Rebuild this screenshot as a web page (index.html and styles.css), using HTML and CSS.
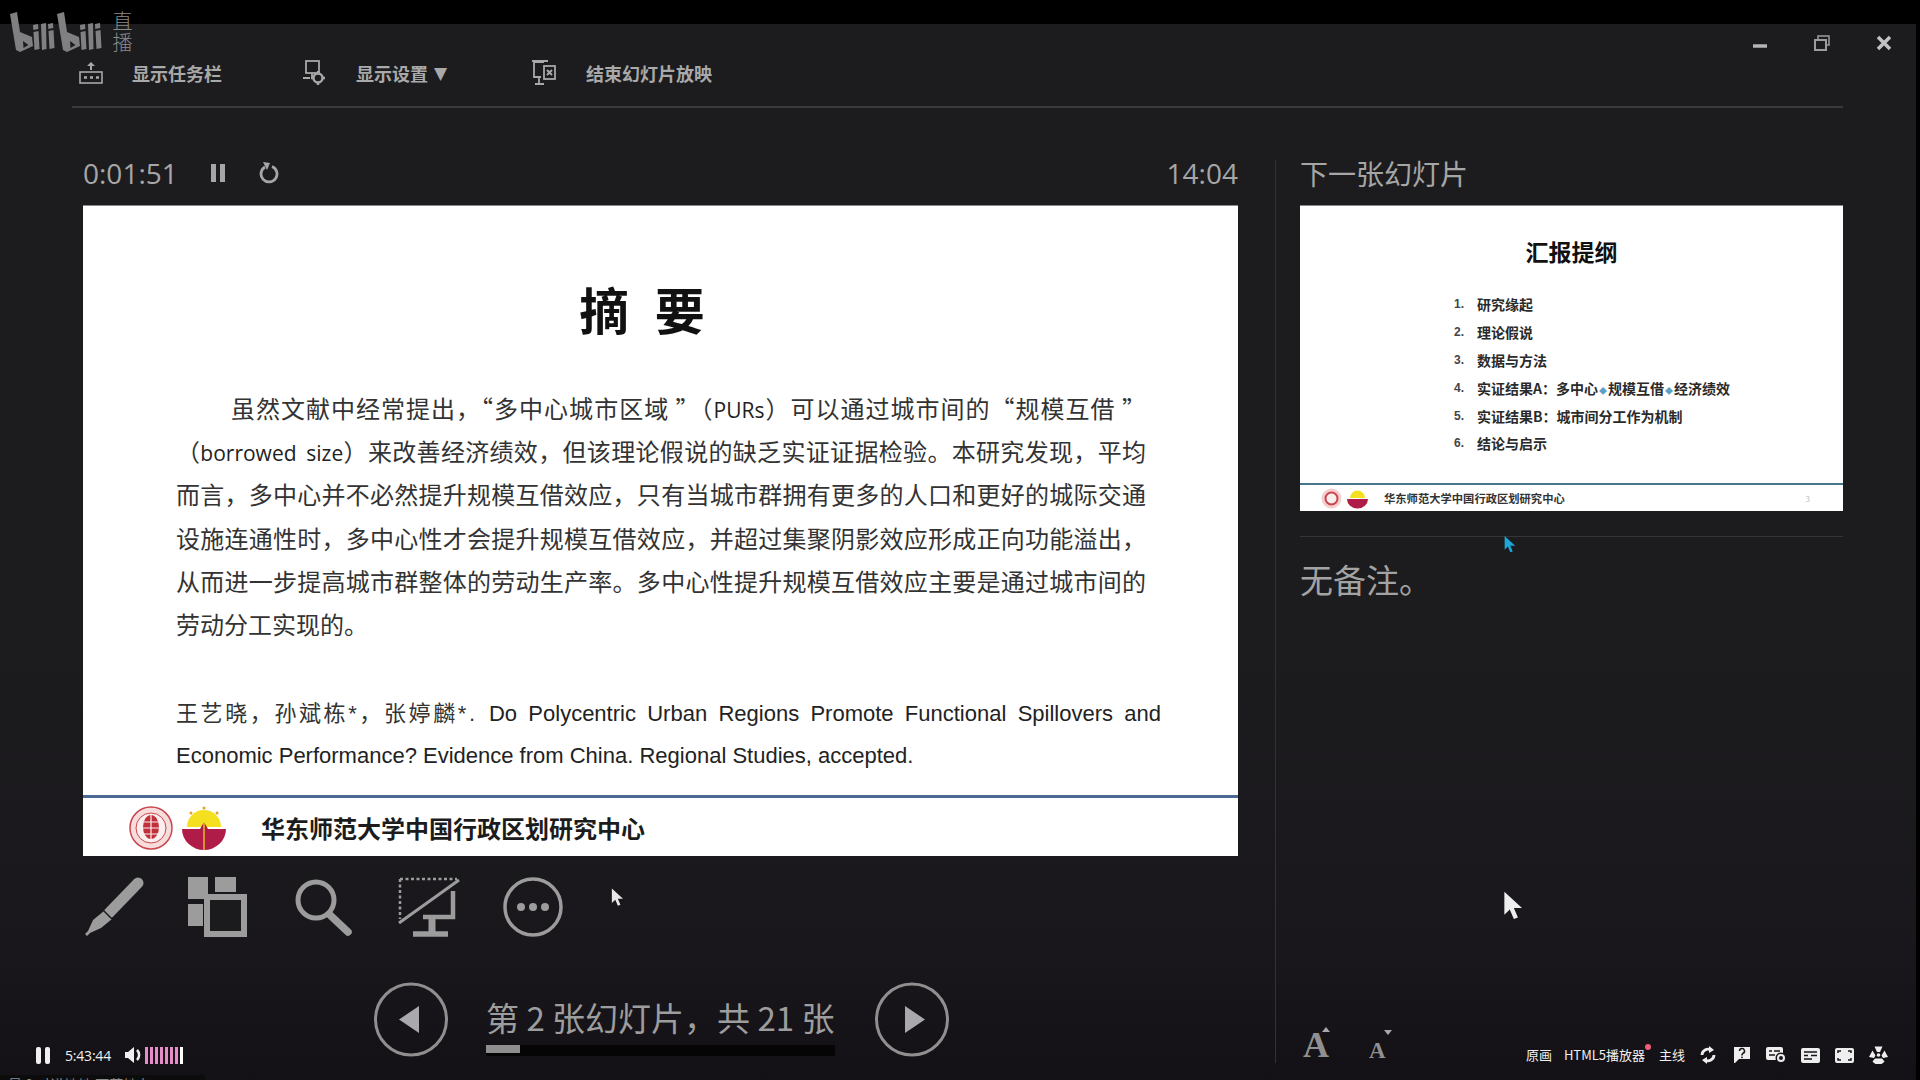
FILE: index.html
```html
<!DOCTYPE html>
<html lang="zh-CN">
<head>
<meta charset="utf-8">
<title>直播</title>
<link rel="stylesheet" href="styles.css">
</head>
<body>
<div class="app">
  <div class="topbar"></div>
  <div class="window">
    <header class="toolbar">
      <div class="tb-item tb-a">
        <svg class="tb-icon" width="24" height="26" viewBox="0 0 24 26"><path d="M12 3v7" stroke="#a8a8a8" stroke-width="2"/><path d="M8 6l4-4 4 4z" fill="#a8a8a8"/><rect x="1" y="12" width="22" height="11" fill="none" stroke="#a8a8a8" stroke-width="1.6"/><path d="M5 17.500h3M11 17.500h3M17 17.500h3" stroke="#a8a8a8" stroke-width="2.500"/></svg>
        <span class="tb-label">显示任务栏</span>
      </div>
      <div class="tb-item tb-b">
        <svg class="tb-icon" width="24" height="26" viewBox="0 0 24 26"><rect x="3" y="1" width="13" height="12" fill="none" stroke="#a8a8a8" stroke-width="1.800"/><path d="M9 13v5M0 18h7" stroke="#a8a8a8" stroke-width="1.800"/><circle cx="15" cy="18" r="4.500" fill="#1c1c1f" stroke="#a8a8a8" stroke-width="2.500"/><path d="M15 11v3M15 22v3M8 18h3M19 18h3" stroke="#a8a8a8" stroke-width="2.400"/></svg>
        <span class="tb-label">显示设置</span>
        <span class="tb-caret">▼</span>
      </div>
      <div class="tb-item tb-c">
        <svg class="tb-icon" width="24" height="26" viewBox="0 0 24 26"><path d="M12 2H2v15h7" fill="none" stroke="#a8a8a8" stroke-width="1.800"/><path d="M0 1h16M7 17v6M3 24h9" stroke="#a8a8a8" stroke-width="1.800"/><rect x="12" y="6" width="11" height="13" fill="none" stroke="#a8a8a8" stroke-width="1.800"/><path d="M15 10l5 5M20 10l-5 5" stroke="#a8a8a8" stroke-width="2"/></svg>
        <span class="tb-label">结束幻灯片放映</span>
      </div>
    </header>

    <main class="main">
      <section class="left">
        <div class="timer-row">
          <span class="timer">0:01:51</span>
          <svg class="t-pause" width="14" height="18" viewBox="0 0 14 18"><path d="M0 0h5v18H0zM9 0h5v18H9z" fill="#a6a6a6"/></svg>
          <svg class="t-reset" width="20" height="22" viewBox="0 0 20 22"><path d="M13 4.500A8 8 0 1 1 6 5" fill="none" stroke="#a6a6a6" stroke-width="2.800"/><path d="M4 0l7 1-3 7z" fill="#a6a6a6"/></svg>
          <span class="clock">14:04</span>
        </div>

        <article class="slide">
          <h1 class="slide-title">摘 要</h1>
          <div class="slide-body">
            <p class="ln ln-first">虽然文献中经常提出，“多中心城市区域 ”（<span class="lat">PURs</span>）可以通过城市间的“规模互借 ”</p>
            <p class="ln">（<span class="lat">borrowed size</span>）来改善经济绩效，但该理论假说的缺乏实证证据检验。本研究发现，平均</p>
            <p class="ln">而言，多中心并不必然提升规模互借效应，只有当城市群拥有更多的人口和更好的城际交通</p>
            <p class="ln">设施连通性时，多中心性才会提升规模互借效应，并超过集聚阴影效应形成正向功能溢出，</p>
            <p class="ln">从而进一步提高城市群整体的劳动生产率。多中心性提升规模互借效应主要是通过城市间的</p>
            <p class="ln ln-end">劳动分工实现的。</p>
          </div>
          <div class="slide-cite">
            <p class="cite-ln cite-just"><span class="cite-cn">王艺晓，孙斌栋*，张婷麟*.</span> Do Polycentric Urban Regions Promote Functional Spillovers and</p>
            <p class="cite-ln">Economic Performance? Evidence from China. Regional Studies, accepted.</p>
          </div>
          <footer class="slide-foot">
            <svg class="seal" width="44" height="44" viewBox="0 0 44 44"><circle cx="22" cy="22" r="21" fill="#f7dcdc" stroke="#c9474f" stroke-width="1.500"/><circle cx="22" cy="22" r="15" fill="#fbeeee" stroke="#c9474f" stroke-width="1"/><ellipse cx="22" cy="21" rx="8" ry="12" fill="#c0303a"/><path d="M22 8v28M14 16h16M13 22h18M15 28h14" stroke="#fbeeee" stroke-width="1.200"/></svg>
            <svg class="seal" width="44" height="44" viewBox="0 0 44 44"><path d="M5 21a17 17 0 0 1 34 0z" fill="#f5e020"/><path d="M0 23h18l4-7 4 7h18a22 21 0 0 1-44 0z" fill="#b01c48"/><path d="M22 16v28" stroke="#f5e020" stroke-width="1.200"/><circle cx="22" cy="2" r="1.500" fill="#e8a020"/><circle cx="9" cy="7" r="1.500" fill="#e8a020"/><circle cx="35" cy="7" r="1.500" fill="#e8a020"/></svg>
            <span class="foot-name">华东师范大学中国行政区划研究中心</span>
          </footer>
        </article>

        <div class="tools">
          <svg class="tool tool-pen" width="60" height="60" viewBox="0 0 60 60"><path d="M55 6L26 36" stroke="#9c9c9c" stroke-width="11" stroke-linecap="round"/><path d="M21 34l8 8-11 9-11 5-3 3-2-2 3-3 5-11z" fill="#9c9c9c"/><path d="M19 32l10 10" stroke="#1b1b1d" stroke-width="1.500"/></svg>
          <svg class="tool tool-grid" width="60" height="60" viewBox="0 0 60 60"><path d="M0 0h20v22H0zM27 0h21v15H27zM0 27h15v22H0z" fill="#9c9c9c"/><rect x="19" y="20" width="37" height="37" fill="#1b1b1d" stroke="#9c9c9c" stroke-width="6"/></svg>
          <svg class="tool" width="60" height="60" viewBox="0 0 60 60"><circle cx="21" cy="23" r="18" fill="none" stroke="#9c9c9c" stroke-width="5"/><path d="M35 38l18 17" stroke="#9c9c9c" stroke-width="7.500" stroke-linecap="round"/></svg>
          <svg class="tool" width="60" height="60" viewBox="0 0 60 60"><path d="M1 2h57M1 2v40" fill="none" stroke="#9c9c9c" stroke-width="2.500" stroke-dasharray="3 2.500"/><path d="M0 46L60 3" stroke="#9c9c9c" stroke-width="3"/><path d="M54 14v26H24" fill="none" stroke="#9c9c9c" stroke-width="4.500"/><path d="M33 40v16" stroke="#9c9c9c" stroke-width="7"/><path d="M14 57h35" stroke="#9c9c9c" stroke-width="5.500"/></svg>
          <svg class="tool" width="60" height="60" viewBox="0 0 60 60"><circle cx="30" cy="30" r="28" fill="none" stroke="#9c9c9c" stroke-width="3.500"/><circle cx="18" cy="30" r="4" fill="#9c9c9c"/><circle cx="30" cy="30" r="4" fill="#9c9c9c"/><circle cx="42" cy="30" r="4" fill="#9c9c9c"/></svg>
        </div>

        <div class="nav">
          <svg width="74" height="75" viewBox="0 0 74 75"><circle cx="37" cy="37.500" r="35.500" fill="none" stroke="#8f8f8f" stroke-width="3"/><path d="M45 24v27L25 37.500z" fill="#a9a9ad"/></svg>
          <div class="nav-mid">
            <span class="nav-text">第 2 张幻灯片，共 21 张</span>
            <div class="nav-track"><div class="nav-fill"></div></div>
          </div>
          <svg width="74" height="75" viewBox="0 0 74 75"><circle cx="37" cy="37.500" r="35.500" fill="none" stroke="#8f8f8f" stroke-width="3"/><path d="M30 24v27l20-13.500z" fill="#a9a9ad"/></svg>
        </div>
      </section>

      <aside class="right">
        <h2 class="next-head">下一张幻灯片</h2>
        <article class="next-slide">
          <h3 class="ns-title">汇报提纲</h3>
          <ol class="ns-list">
            <li>研究缘起</li>
            <li>理论假说</li>
            <li>数据与方法</li>
            <li>实证结果A：多中心<span class="ns-arrow">◆</span>规模互借<span class="ns-arrow">◆</span>经济绩效</li>
            <li>实证结果B：城市间分工作为机制</li>
            <li>结论与启示</li>
          </ol>
          <footer class="ns-foot">
            <svg width="21" height="21" viewBox="0 0 21 21"><circle cx="10.500" cy="10.500" r="10" fill="#f3cfd0"/><circle cx="10.500" cy="10.500" r="6" fill="#f9eeee" stroke="#c8474f" stroke-width="2"/></svg>
            <svg width="21" height="21" viewBox="0 0 21 21"><path d="M3 10a7.500 7.500 0 0 1 15 0z" fill="#f5e020"/><path d="M0 11h21a10.500 9.500 0 0 1-21 0z" fill="#b01c48"/></svg>
            <span class="ns-name">华东师范大学中国行政区划研究中心</span>
            <span class="ns-page">3</span>
          </footer>
        </article>
        <div class="notes">无备注。</div>
        <div class="font-btns">
          <span class="a-big">A<i class="tri-up"></i></span>
          <span class="a-small">A<i class="tri-down"></i></span>
        </div>
      </aside>
    </main>
  </div>
</div>

<div class="logo">
  <svg width="104" height="42" viewBox="10 11 104 42">
    <defs>
      <g id="bili" fill="#808082">
        <path fill-rule="evenodd" d="M10 14l7-2 3 20 12 5 1 9-13 6-4-2zM23 41l.5 7 5-3z"/>
        <path d="M33.500 32l5-1 1 18-5 1zM33 25l5-1 .3 5-5 1zM41 24l5-1 .5 26-4.500 1zM48.500 31l5-1 1 18-5 1zM48 24l5-1 .3 5-5 1z"/>
      </g>
    </defs>
    <use href="#bili"/>
    <use href="#bili" x="47"/>
  </svg>
  <span class="logo-text">直播</span>
</div>

<div class="win-btns">
  <svg width="16" height="16" viewBox="0 0 16 16"><path d="M1 11h14" stroke="#b5b5b5" stroke-width="3.500"/></svg>
  <svg width="16" height="16" viewBox="0 0 16 16"><rect x="1" y="5" width="11" height="10" fill="none" stroke="#9c9c9c" stroke-width="2"/><path d="M4 4V1h11v9h-2" fill="none" stroke="#9c9c9c" stroke-width="1.500"/></svg>
  <svg width="16" height="16" viewBox="0 0 16 16"><path d="M2 2l12 12M14 2L2 14" stroke="#c2c2c2" stroke-width="3.500"/></svg>
</div>

<svg class="cursor cur-a" width="14" height="21" viewBox="0 0 14 21"><path d="M1 0v17l4-4 3 7 3-1-3-7h6z" fill="#e8e8e8"/></svg>
<svg class="cursor cur-b" width="13" height="17" viewBox="0 0 14 21"><path d="M1 0v17l4-4 3 7 3-1-3-7h6z" fill="#1ea6d8"/></svg>
<svg class="cursor cur-c" width="19" height="30" viewBox="0 0 14 21"><path d="M1 0v17l4-4 3 7 3-1-3-7h6z" fill="#eeeeee"/></svg>

<div class="player">
  <div class="pl-left">
    <svg width="14" height="17" viewBox="0 0 14 17"><rect width="5" height="17" rx="2" fill="#f0f0f0"/><rect x="9" width="5" height="17" rx="2" fill="#f0f0f0"/></svg>
    <span class="pl-time">5:43:44</span>
    <svg class="pl-vol" width="18" height="16" viewBox="0 0 18 16"><path d="M0 5h3l6-5v16l-6-5H0z" fill="#f0f0f0"/><path d="M12 3a7 7 0 0 1 0 10" fill="none" stroke="#f0f0f0" stroke-width="2.500"/></svg>
    <div class="pl-bars"><i></i><i></i><i></i><i></i><i></i><i></i><i></i><i class="bar-w"></i></div>
  </div>
  <div class="pl-right">
    <span class="pl-txt">原画</span>
    <span class="pl-txt pl-dot">HTML5播放器</span>
    <span class="pl-txt">主线</span>
    <svg class="pl-ic pl-sync" width="16" height="18" viewBox="0 0 16 18"><path d="M2 9a6 6 0 0 1 9-5M14 9a6 6 0 0 1-9 5" fill="none" stroke="#eee" stroke-width="2.800"/><path d="M9 0l5 4-5 3zM7 18l-5-4 5-3z" fill="#eee"/></svg>
    <svg class="pl-ic" width="18" height="18" viewBox="0 0 18 18"><path d="M1 1h16v12H6l-4 4-1 0z" fill="#eee"/><path d="M6.500 5a2.500 2.500 0 1 1 3.500 2.300L9 8.500v1" fill="none" stroke="#17151a" stroke-width="1.500"/><circle cx="9" cy="11.300" r=".9" fill="#17151a"/></svg>
    <svg class="pl-ic" width="20" height="18" viewBox="0 0 20 18"><rect y="1" width="17" height="13" rx="2" fill="#eee"/><path d="M3 5h3M8 5h6M3 9h6" stroke="#17151a" stroke-width="1.500"/><circle cx="15" cy="12" r="5.500" fill="#17151a"/><circle cx="15" cy="12" r="3" fill="none" stroke="#eee" stroke-width="2"/></svg>
    <svg class="pl-ic" width="19" height="15" viewBox="0 0 19 15"><rect width="19" height="15" rx="2" fill="#eee"/><path d="M3 4h13M3 7.500h4M10 7.500h6M3 11h8" stroke="#17151a" stroke-width="1.500"/></svg>
    <svg class="pl-ic" width="19" height="15" viewBox="0 0 19 15"><rect width="19" height="15" rx="2" fill="#eee"/><path d="M3 5V3h3M13 3h3v2M16 10v2h-3M6 12H3v-2" fill="none" stroke="#17151a" stroke-width="1.500"/></svg>
    <svg class="pl-ic" width="19" height="18" viewBox="0 0 19 18"><circle cx="9.500" cy="9" r="1.800" fill="#eee"/><path d="M5.500 .5h8L11 6H8zM0 11l3.500-6.500 3 5L5 12zM19 11l-3.500-6.500-3 5L14 12zM6 12.500h7l2.500 3a7.500 7.500 0 0 1-12 0z" fill="#eee"/></svg>
  </div>
</div>
<div class="subtitle">最 0 对讲地地 可蓄地布</div>
</body>
</html>
```

FILE: styles.css
```css
* { box-sizing: border-box; }
html, body { margin: 0; padding: 0; width: 1920px; height: 1080px; overflow: hidden; background: #000; }
body { font-family: "Noto Sans CJK SC", "Noto Sans", sans-serif; position: relative; }
h1, h2, h3, p, ol { margin: 0; padding: 0; font-weight: inherit; }

.app { display: flex; flex-direction: column; height: 1080px; }
.topbar { height: 24px; background: #000; flex: none; }
.window {
  flex: 1; display: flex; flex-direction: column; min-height: 0; margin-right: 4px;
  background: linear-gradient(180deg, #1c1c1f 0%, #1c1b1e 60%, #19171b 88%, #131115 100%);
}

.toolbar {
  height: 84px; flex: none; margin: 0 73px 0 72px; padding-top: 16px;
  display: flex; align-items: center; border-bottom: 2px solid #3a3a3c;
}
.tb-item { display: flex; align-items: center; color: #a9a9a9; }
.tb-a { margin-left: 7px; }
.tb-b { margin-left: 81px; }
.tb-c { margin-left: 85px; }
.tb-c .tb-icon { margin-right: 30px; }
.tb-icon { flex: none; margin-right: 29px; }
.tb-label { font-size: 18px; font-weight: 700; line-height: 24px; }
.tb-caret { font-size: 17px; margin-left: 6px; font-family: "DejaVu Sans", sans-serif; line-height: 24px; }

.main { flex: 1; display: flex; min-height: 0; padding: 52px 73px 17px 83px; }
.left { width: 1155px; flex: none; }
.timer-row { height: 26px; margin-bottom: 19px; display: flex; align-items: center; color: #a6a6a6; }
.timer { font-family: "Open Sans", sans-serif; font-size: 28px; line-height: 26px; width: 128px; font-weight: 400; }
.t-pause { flex: none; }
.t-reset { flex: none; margin-left: 34px; }
.clock { margin-left: auto; font-family: "Open Sans", sans-serif; font-size: 28px; line-height: 26px; }

.slide {
  width: 1155px; height: 651px; background: #fff; display: flex; flex-direction: column;
  padding-left: 93px; position: relative; color: #333; border-top: 1px solid #8a8a8a;
}
.slide-title {
  font-size: 50px; font-weight: 700; line-height: 60px; color: #111; margin-top: 72px;
  width: 970px; padding-right: 38px; text-align: center; word-spacing: 14px;
}
.slide-body { margin-top: 48px; width: 970px; font-size: 24px; line-height: 43.2px; }
.ln { height: 43.2px; line-height: 43.2px; text-align: justify; text-align-last: justify; }
.ln-first { padding-left: 55px; }
.ln-end { text-align: left; text-align-last: left; }
.lat { font-family: "Open Sans", sans-serif; font-size: 21px; font-weight: 500; line-height: 1; word-spacing: 4px; color: #222; }
.slide-cite {
  margin-top: 48px; width: 985px; font-family: "Liberation Sans", "Noto Sans CJK SC", sans-serif;
  font-size: 22px; line-height: 41.5px; color: #222;
}
.cite-ln { height: 41.5px; white-space: normal; }
.cite-just { text-align: justify; text-align-last: justify; }
.cite-cn { display: inline-block; letter-spacing: 2.6px; color: #333; line-height: 1; }
.slide-foot {
  margin: auto 0 0 -93px; height: 61px; flex: none; border-top: 3px solid #4a6a94;
  display: flex; align-items: center; padding-left: 46px; gap: 9px; padding-top: 2px;
}
.seal { flex: none; }
.foot-name { font-size: 24px; font-weight: 700; color: #1c1c1c; margin-left: 26px; line-height: 30px; }

.tools { display: flex; gap: 44.250px; margin-top: 21px; padding-left: 3px; height: 60px; }
.tool { flex: none; overflow: visible; }
.tool-pen { margin-left: -3px; margin-right: 3px; }
.tool-grid { margin-left: -2px; margin-right: 2px; }

.nav { display: flex; align-items: stretch; margin-top: 45px; padding-left: 291px; height: 75px; }
.nav svg { flex: none; }
.nav-mid { width: 349px; margin: 0 40px 0 38px; display: flex; flex-direction: column; justify-content: flex-end; padding-bottom: 1px; }
.nav-text { font-size: 33px; line-height: 40px; color: #9d9d9d; white-space: nowrap; margin-bottom: 8px; }
.nav-track { height: 11px; background: #050505; }
.nav-fill { width: 34px; height: 8px; background: #8e8e8e; }

.right { flex: 1; margin-left: 37px; padding-left: 24px; border-left: 1px solid #323234; display: flex; flex-direction: column; }
.next-head { height: 26px; margin-bottom: 19px; font-size: 28px; line-height: 26px; color: #a6a6a6; font-weight: 400; white-space: nowrap; }
.next-slide {
  width: 543px; height: 306px; flex: none; background: #fff; color: #2a2a2a;
  display: flex; flex-direction: column; border-top: 1px solid #8a8a8a;
}
.ns-title { font-size: 23px; line-height: 30px; font-weight: 700; text-align: center; color: #111; margin-top: 30px; }
.ns-list { list-style: none; margin: 25px 0 0 154px; font-size: 14px; font-weight: 700; counter-reset: item; }
.ns-list li { line-height: 27.900px; height: 27.900px; counter-increment: item; position: relative; padding-left: 23px; white-space: nowrap; }
.ns-list li::before { content: counter(item) "."; position: absolute; left: 0; font-size: 12px; font-weight: 700; font-family: "Liberation Sans", sans-serif; color: #444; }
.ns-arrow { color: #5aa0c8; font-size: 8px; margin: 0 1px; }
.ns-foot {
  margin-top: auto; height: 28px; flex: none; border-top: 2px solid #47768a;
  display: flex; align-items: center; padding-left: 21px; gap: 5px;
}
.ns-name { font-size: 11.300px; font-weight: 700; color: #333; margin-left: 11px; }
.ns-page { margin-left: auto; margin-right: 33px; font-size: 8px; color: #bbb; }

.notes {
  margin-top: 25px; border-top: 1px solid #353537; padding-top: 19px; width: 543px;
  font-size: 33px; line-height: 46px; color: #a3a3a3;
}
.font-btns { margin-top: auto; padding-left: 3px; display: flex; align-items: flex-end; gap: 40px; color: #909090; font-family: "Liberation Serif", serif; font-weight: 700; }
.a-big { font-size: 36px; line-height: 36px; position: relative; }
.a-small { font-size: 23px; line-height: 24px; position: relative; }
.tri-up { position: absolute; left: 19px; top: 0; border: 4px solid transparent; border-top: 0; border-bottom: 5px solid #a8a8a8; }
.tri-down { position: absolute; left: 15px; top: -9px; border: 4px solid transparent; border-bottom: 0; border-top: 5px solid #a8a8a8; }

.logo { position: absolute; left: 10px; top: 11px; display: flex; }
.logo svg { display: block; }
.logo-text { margin-left: -3px; writing-mode: vertical-rl; font-size: 20px; letter-spacing: 1px; line-height: 22px; height: 44px; color: #8a8a8a; font-weight: 300; }

.win-btns { position: absolute; top: 35px; left: 1752px; display: flex; gap: 46px; }

.cursor { position: absolute; }
.cur-a { left: 611px; top: 888px; width: 12px; height: 19px; }
.cur-b { left: 1503px; top: 536px; }
.cur-c { left: 1503px; top: 891px; }

.player {
  position: absolute; left: 0; right: 4px; bottom: 0; height: 50px; display: flex;
  align-items: center; justify-content: space-between; padding: 0 28px 0 36px; color: #f0f0f0;
}
.pl-left, .pl-right { display: flex; align-items: center; }
.pl-time { font-family: "Open Sans", sans-serif; font-size: 14px; margin-left: 15px; width: 60px; letter-spacing: -.2px; }
.pl-bars { display: flex; gap: 2px; height: 17px; margin-left: 2px; }
.pl-bars i { width: 3px; background: #e88cc9; display: block; }
.pl-bars .bar-w { background: #fff; }
.pl-txt { font-size: 13px; line-height: 18px; white-space: nowrap; }
.pl-dot { margin-left: 12px; margin-right: 14px; position: relative; }
.pl-dot::after { content: ""; position: absolute; right: -6px; top: -2px; width: 6px; height: 6px; border-radius: 50%; background: #ee5c78; }
.pl-ic { flex: none; margin-left: 15px; }
.pl-sync { margin-left: 15px; margin-right: 2px; }

.subtitle {
  position: absolute; left: 0; bottom: 0; width: 205px; height: 5px; overflow: hidden;
  background: #0c0c0c; color: #8a8a8a; font-size: 14px; line-height: 18px; padding-left: 8px; white-space: nowrap;
}
```
